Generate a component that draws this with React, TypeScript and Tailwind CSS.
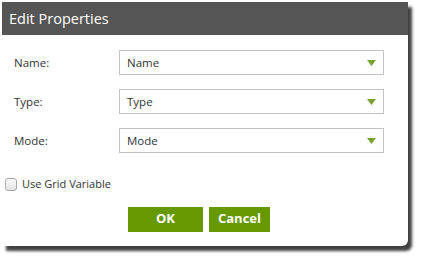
import React, { useState } from 'react';

const fields = [
  { label: 'Name:', value: 'Name' },
  { label: 'Type:', value: 'Type' },
  { label: 'Mode:', value: 'Mode' },
];

function SelectBox({ value }: { value: string }) {
  return (
    <div className="flex items-center justify-between w-[265px] h-[25px] border border-[#c3c3c3] bg-white pl-[7px] pr-[7px]">
      <span className="text-[11.5px] text-[#333]">{value}</span>
      <svg width="9" height="6" viewBox="0 0 9 6">
        <polygon points="0,0 9,0 4.5,6" fill="#78a22f" />
      </svg>
    </div>
  );
}

export default function App() {
  const [useGrid, setUseGrid] = useState(false);

  return (
    <div
      className="w-[422px] h-[262px] bg-white pt-[2px] pl-[2px]"
      style={{ fontFamily: '"Open Sans", "Noto Sans", sans-serif' }}
    >
      <div className="w-[406px] h-[244px] bg-white rounded-br-[6px] shadow-[4px_5px_3px_rgba(0,0,0,0.75)] flex flex-col">
        <div className="h-[33px] bg-[#555555] flex items-center pl-[7px]">
          <span className="text-white text-[14.5px]">Edit Properties</span>
        </div>

        <div className="flex flex-col pt-[15px] pl-[12px]">
          <div className="flex flex-col gap-[14px]">
            {fields.map((f) => (
              <div key={f.label} className="flex items-center">
                <span className="w-[105px] text-[11.5px] text-[#333]">{f.label}</span>
                <SelectBox value={f.value} />
              </div>
            ))}
          </div>

          <label className="flex items-center gap-[5px] mt-[23px] -ml-[9px] cursor-pointer">
            <span
              onClick={() => setUseGrid(!useGrid)}
              className="w-[12px] h-[13px] rounded-[3px] border border-[#a9a9a9] bg-gradient-to-b from-[#fafafa] to-[#e4e4e4]"
            />
            <span className="text-[11px] text-[#333]">Use Grid Variable</span>
          </label>

          <div className="flex gap-[6px] mt-[14px] ml-[114px]">
            <button className="w-[75px] h-[25px] bg-[#669900] text-white text-[13px] font-bold">OK</button>
            <button className="w-[61px] h-[25px] bg-[#669900] text-white text-[13px] font-bold">Cancel</button>
          </div>
        </div>
      </div>
    </div>
  );
}
